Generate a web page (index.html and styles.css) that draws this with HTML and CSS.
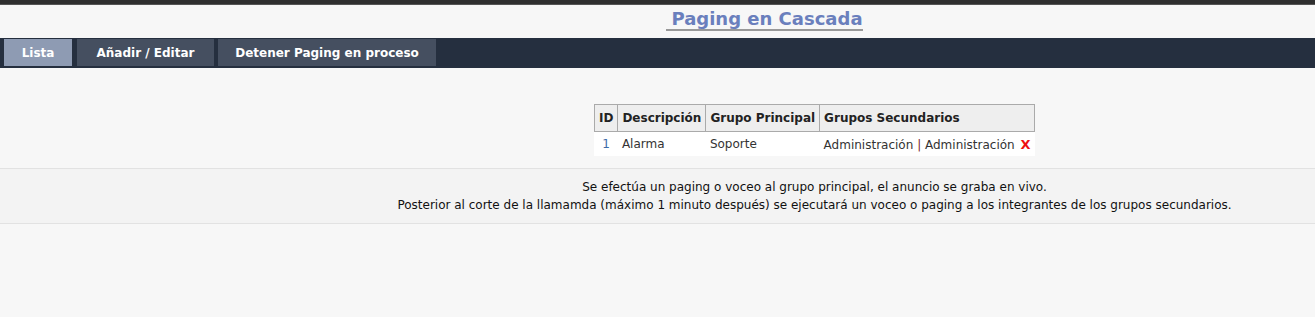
FILE: index.html
```html
<!DOCTYPE html>
<html lang="es">
<head>
<meta charset="utf-8">
<title>Paging en Cascada</title>
<link rel="stylesheet" href="styles.css">
</head>
<body>
<div class="topbar"></div>
<header class="title-wrap">
  <h1 class="title">Paging en Cascada</h1>
</header>
<nav class="nav">
  <a class="tab tab-list active" href="#">Lista</a>
  <a class="tab tab-edit" href="#">Añadir / Editar</a>
  <a class="tab tab-stop" href="#">Detener Paging en proceso</a>
</nav>
<main class="content">
  <table class="grid">
    <thead>
      <tr>
        <th>ID</th>
        <th>Descripción</th>
        <th>Grupo Principal</th>
        <th>Grupos Secundarios</th>
      </tr>
    </thead>
    <tbody>
      <tr>
        <td class="id">1</td>
        <td>Alarma</td>
        <td>Soporte</td>
        <td>Administración <span class="sep">|</span> Administración <span class="del">X</span></td>
      </tr>
    </tbody>
  </table>
</main>
<section class="info">
  <p>Se efectúa un paging o voceo al grupo principal, el anuncio se graba en vivo.</p>
  <p>Posterior al corte de la llamamda (máximo 1 minuto después) se ejecutará un voceo o paging a los integrantes de los grupos secundarios.</p>
</section>
</body>
</html>
```

FILE: styles.css
```css
html, body {
  margin: 0;
  padding: 0;
}
body {
  background: #f7f7f7;
  font-family: "DejaVu Sans", Verdana, sans-serif;
  font-size: 12px;
  color: #222;
}
.topbar {
  height: 4px;
  background: #2f2f2f;
  border-bottom: 1px solid #555;
}
.title-wrap {
  height: 33px;
  padding-left: 214px;
  text-align: center;
}
.title {
  display: inline-block;
  margin: 3px 0 0;
  padding: 0 0 0 5px;
  font-size: 18px;
  font-weight: bold;
  color: #6a7fbd;
  line-height: 21px;
  border-bottom: 2px solid #999;
}
.nav {
  display: flex;
  background: #252f3f;
  height: 30px;
  padding: 1px 0 0 4px;
  box-sizing: border-box;
}
.tab {
  display: flex;
  align-items: center;
  justify-content: center;
  height: 27px;
  background: #454f60;
  color: #fff;
  font-weight: bold;
  font-size: 12px;
  text-decoration: none;
}
.tab-list {
  width: 68px;
}
.tab-edit {
  width: 137px;
  margin-left: 5px;
}
.tab-stop {
  width: 218px;
  margin-left: 4px;
}
.tab.active {
  background: #8e9bb3;
}
.content {
  padding: 36px 0 12px 314px;
  display: flex;
  justify-content: center;
  border-bottom: 1px solid #e2e2e2;
}
.grid {
  border-collapse: collapse;
  background: #fff;
}
.grid th {
  background: #eeeeee;
  border: 1px solid #aaa;
  font-weight: bold;
  text-align: left;
  padding: 0 4px 0 4px;
  height: 26px;
  color: #222;
}
.grid td {
  padding: 0 4px;
  height: 24px;
  color: #333;
}
.grid td.id {
  text-align: center;
  color: #3d6aa8;
}
.sep {
  color: #7a1e1e;
}
.del {
  color: #ee1111;
  font-weight: bold;
  font-size: 13px;
  padding-left: 2px;
}
.info {
  background: #f3f3f3;
  border-bottom: 1px solid #e2e2e2;
  padding: 9px 0 9px 314px;
  text-align: center;
  color: #111;
}
.info p {
  margin: 0;
  line-height: 18px;
}
```
